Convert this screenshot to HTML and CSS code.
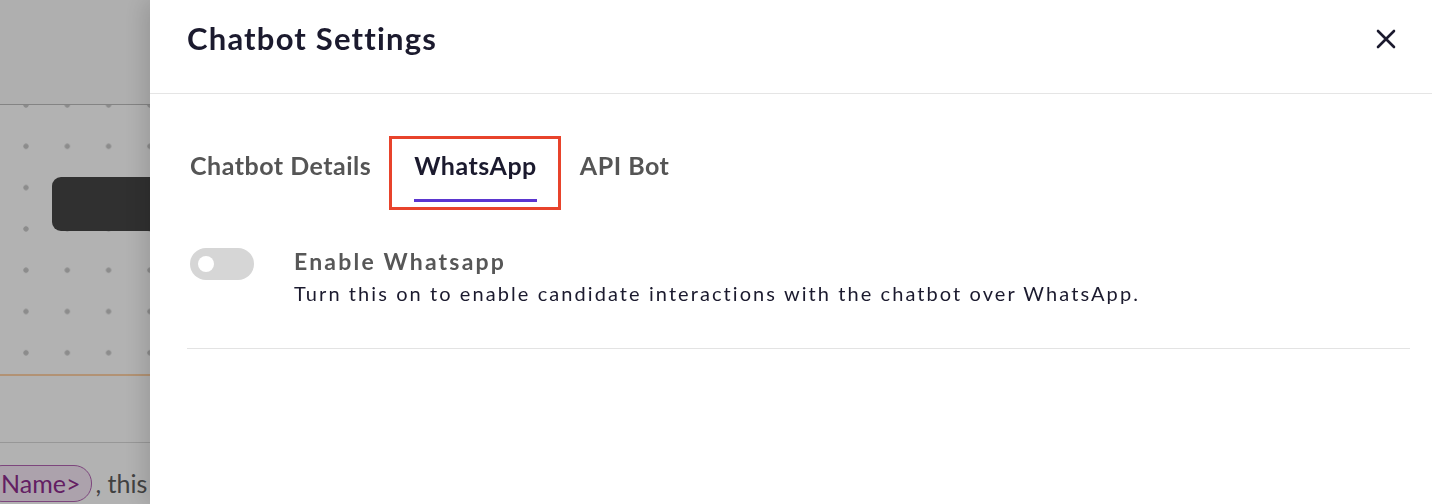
FILE: index.html
```html
<!DOCTYPE html>
<html lang="en">
<head>
<meta charset="utf-8">
<title>Chatbot Settings</title>
<link rel="stylesheet" href="styles.css">
</head>
<body>
<div class="builder">
  <div class="builder-top"></div>
  <div class="flow-canvas">
    <div class="flow-node"></div>
  </div>
  <div class="message-panel">
    <div class="message-spacer"></div>
    <p class="message-line"><span class="var-tag">Name&gt;</span>, this</p>
  </div>
</div>

<div class="backdrop"></div>

<aside class="drawer">
  <header class="drawer-header">
    <h1 class="drawer-title">Chatbot Settings</h1>
    <button class="close-btn" type="button" aria-label="Close">
      <svg width="20" height="20" viewBox="0 0 20 20" fill="none" stroke="currentColor" stroke-width="2.6" stroke-linecap="round">
        <path d="M2 2L18 18M18 2L2 18"/>
      </svg>
    </button>
  </header>

  <div class="drawer-body">
    <nav class="tabs">
      <span class="tab">Chatbot Details</span>
      <span class="tab tab-active">WhatsApp</span>
      <span class="tab">API Bot</span>
    </nav>

    <div class="setting">
      <span class="toggle"><span class="toggle-knob"></span></span>
      <div class="setting-text">
        <div class="setting-title">Enable Whatsapp</div>
        <div class="setting-desc">Turn this on to enable candidate interactions with the chatbot over WhatsApp.</div>
      </div>
    </div>
  </div>
</aside>
</body>
</html>
```

FILE: styles.css
```css
* {
  box-sizing: border-box;
}

html,
body {
  margin: 0;
  height: 100%;
  overflow: hidden;
}

body {
  font-family: "Lato", "Noto Sans", sans-serif;
  background: #ffffff;
}

/* ---------- flow builder underneath ---------- */
.builder {
  display: flex;
  flex-direction: column;
  height: 100%;
  background: #ffffff;
}

.builder-top {
  height: 105px;
  flex: none;
  background: #fbfbfb;
  border-bottom: 1px solid #bdbdbd;
  box-shadow: 0 1px 3px rgba(0, 0, 0, 0.12);
}

.flow-canvas {
  height: 269px;
  flex: none;
  padding: 72px 0 0 52px;
  background-color: #ffffff;
  background-image: radial-gradient(circle, #c9c9c9 2.3px, transparent 3px);
  background-size: 41.3px 41.3px;
  background-position: 5.35px -20.65px;
}

.flow-node {
  height: 54px;
  width: 400px;
  border-radius: 9px;
  background: #454545;
}

.message-panel {
  flex: 1;
  border-top: 2px solid #ffd2a6;
  display: flex;
  flex-direction: column;
}

.message-spacer {
  height: 67px;
  border-bottom: 1px solid #d9d9d9;
}

.message-line {
  margin: 22px 0 0 -16px;
  font-family: "Lato", "Liberation Sans", sans-serif;
  font-size: 25px;
  line-height: 37px;
  color: #5e5e5e;
  display: flex;
  align-items: center;
  white-space: nowrap;
}

.var-tag {
  display: inline-block;
  height: 37px;
  line-height: 35px;
  padding: 0 11px 0 16px;
  margin-right: 3px;
  border: 1px solid #b465b4;
  border-radius: 18px;
  background: #f6e9f6;
  color: #8e2d8e;
}

/* ---------- modal backdrop ---------- */
.backdrop {
  position: fixed;
  inset: 0;
  background: rgba(0, 0, 0, 0.3);
}

/* ---------- settings drawer ---------- */
.drawer {
  position: fixed;
  top: 0;
  bottom: 0;
  left: 150px;
  right: 0;
  background: #ffffff;
  box-shadow: -6px 0 22px rgba(0, 0, 0, 0.14);
  color: #1b1a2e;
}

.drawer-header {
  height: 94px;
  display: flex;
  align-items: flex-start;
  padding: 20px 36px 0 37px;
  border-bottom: 1px solid #e5e5e5;
}

.drawer-title {
  margin: 0;
  font-size: 31px;
  line-height: 36px;
  letter-spacing: 1.2px;
  font-weight: 700;
  color: #1b1a2e;
}

.close-btn {
  margin: 9px 0 0 auto;
  padding: 0;
  border: 0;
  background: none;
  color: #1b1a2e;
  width: 20px;
  height: 20px;
  display: flex;
}

.drawer-body {
  padding: 0 22px 0 37px;
}

.tabs {
  display: flex;
  gap: 43px;
  padding: 57px 0 0 3px;
}

.tab {
  position: relative;
  font-size: 25px;
  line-height: 28px;
  letter-spacing: 0.5px;
  font-weight: 700;
  color: #555555;
  padding-bottom: 20px;
  border-bottom: 3px solid transparent;
}

.tab-active {
  color: #1b1a2e;
  border-bottom-color: #5b36cf;
}

/* highlight frame around the active tab */
.tab-active::before {
  content: "";
  position: absolute;
  left: -25px;
  right: -24px;
  top: -15px;
  bottom: -11px;
  border: 3px solid #e8432b;
}

.setting {
  display: flex;
  gap: 40px;
  padding: 46px 0 43px 3px;
  border-bottom: 1px solid #e3e3e3;
}

.toggle {
  flex: none;
  width: 64px;
  height: 32px;
  border-radius: 16px;
  background: #d6d6d6;
  display: flex;
  align-items: center;
  padding-left: 8px;
}

.toggle-knob {
  width: 16px;
  height: 16px;
  border-radius: 50%;
  background: #ffffff;
}

.setting-title {
  font-size: 23px;
  line-height: 26px;
  letter-spacing: 2.2px;
  font-weight: 700;
  color: #575757;
}

.setting-desc {
  margin-top: 7px;
  font-size: 20px;
  line-height: 24px;
  letter-spacing: 2.08px;
  color: #1b1a2e;
}
```
